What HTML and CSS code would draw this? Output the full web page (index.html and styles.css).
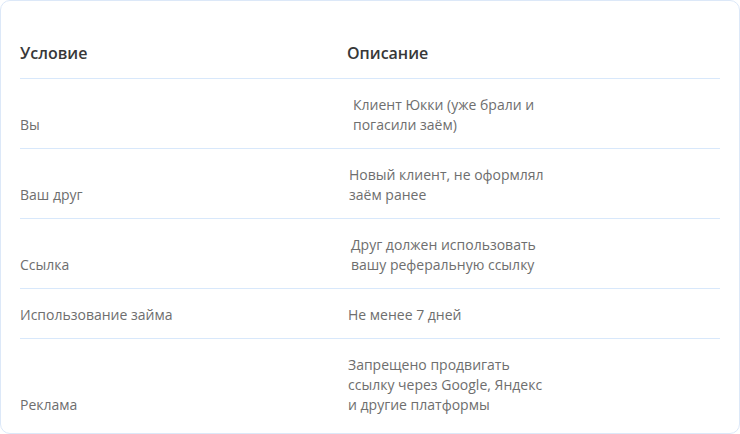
FILE: index.html
```html
<!DOCTYPE html>
<html lang="ru">
<head>
<meta charset="utf-8">
<link rel="stylesheet" href="styles.css">
</head>
<body>
<div class="card">
  <div class="table">
    <div class="row head">
      <div class="cell">Условие</div>
      <div class="cell desc">Описание</div>
    </div>
    <div class="row">
      <div class="cell">Вы</div>
      <div class="cell desc shift-6">Клиент Юкки (уже брали и погасили заём)</div>
    </div>
    <div class="row">
      <div class="cell">Ваш друг</div>
      <div class="cell desc shift-2">Новый клиент, не оформлял заём ранее</div>
    </div>
    <div class="row">
      <div class="cell">Ссылка</div>
      <div class="cell desc shift-4">Друг должен использовать вашу реферальную ссылку</div>
    </div>
    <div class="row">
      <div class="cell">Использование займа</div>
      <div class="cell desc shift-1">Не менее 7 дней</div>
    </div>
    <div class="row last">
      <div class="cell">Реклама</div>
      <div class="cell desc shift-1">Запрещено продвигать ссылку через Google, Яндекс и другие платформы</div>
    </div>
  </div>
</div>
</body>
</html>
```

FILE: styles.css
```css
* { box-sizing: border-box; }
html, body { margin: 0; padding: 0; background: #fff; }
body {
  font-family: "Open Sans", "Liberation Sans", sans-serif;
  width: 740px;
  height: 434px;
}
.card {
  width: 740px;
  height: 434px;
  border: 1px solid #dce8f8;
  border-radius: 10px;
  padding: 0 19px;
  background: #fff;
}
.table {
  display: flex;
  flex-direction: column;
}
.row {
  display: grid;
  grid-template-columns: 327px 1fr;
  align-items: end;
  padding: 16px 0 13px;
  border-bottom: 1px solid #d8e8fb;
  font-size: 14px;
  line-height: 20px;
  color: #6e6e6e;
}
.row.head {
  padding: 40px 0 13px;
  font-size: 16px;
  font-weight: 600;
  line-height: 24px;
  color: #383838;
}
.row.last { border-bottom: none; }
.desc { max-width: 205px; }
.head .desc { max-width: none; }
.shift-1 { padding-left: 1px; }
.shift-2 { padding-left: 2px; }
.shift-4 { padding-left: 4px; }
.shift-6 { padding-left: 6px; }
```
